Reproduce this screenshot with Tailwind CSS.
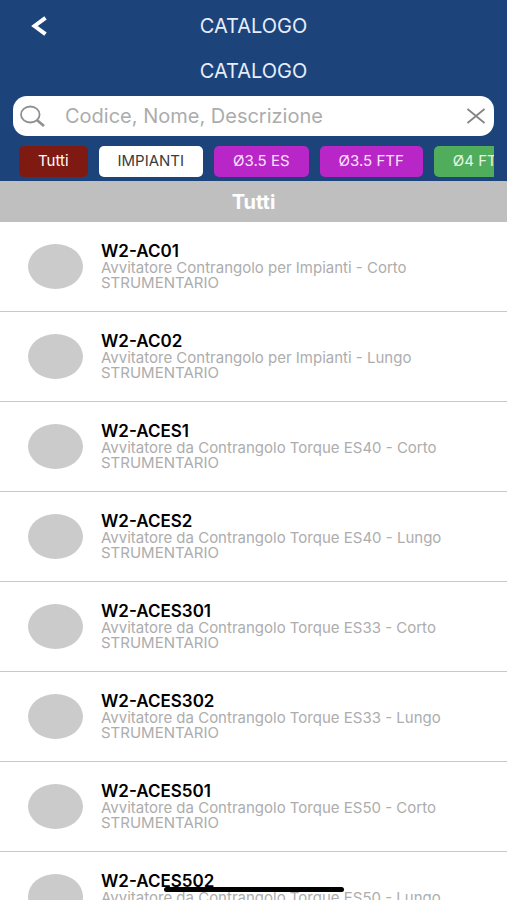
<!DOCTYPE html>
<html lang="it">
<head>
<meta charset="utf-8">
<meta name="viewport" content="width=device-width, initial-scale=1">
<title>Catalogo</title>
<script src="https://cdn.jsdelivr.net/npm/@tailwindcss/browser@4"></script>
</head>
<body class="h-screen overflow-hidden bg-white font-['Inter','Liberation_Sans',sans-serif]">
<div class="flex h-full flex-col">
  <header class="shrink-0 bg-[#1d437b] px-[13px] pb-1 text-[#e6eefc]">
    <div class="grid h-[52px] grid-cols-[52px_1fr_52px] items-center">
      <button type="button" aria-label="Indietro" class="flex justify-center">
        <svg class="h-5 w-4" viewBox="0 0 16 20" fill="none" stroke="#fff" stroke-width="4"><path d="M14.500 1.800 3.500 10l11 8.200"/></svg>
      </button>
      <h1 class="text-center text-xl">CATALOGO</h1>
    </div>
    <h2 class="flex h-11 items-center justify-center pb-[6px] text-xl">CATALOGO</h2>
    <label class="flex h-10 items-center rounded-[14px] bg-white pr-2 pl-[7px]">
      <svg class="h-6 w-[26px] shrink-0" viewBox="0 0 26 24" fill="none" stroke="#8f8f8f" stroke-width="1.800"><ellipse cx="10.300" cy="10.500" rx="9.300" ry="8"/><path d="M16.800 16 24 22" stroke-width="2.600"/></svg>
      <input type="text" aria-label="Cerca" placeholder="Codice, Nome, Descrizione" class="ml-[19px] min-w-0 flex-1 bg-transparent text-xl text-gray-700 outline-none placeholder:text-[#acacac]">
      <button type="button" aria-label="Cancella" class="shrink-0">
        <svg class="h-4 w-5" viewBox="0 0 20 16" fill="none" stroke="#858585" stroke-width="1.800"><path d="M1.500 1 18.500 15M18.500 1 1.500 15"/></svg>
      </button>
    </label>
    <nav class="mt-[10px] flex gap-[11px] overflow-hidden pl-[6px] text-[15px] whitespace-nowrap">
      <button type="button" class="h-[31px] shrink-0 rounded-[5px] bg-[#7f1a12] px-[19px] text-white">Tutti</button>
      <button type="button" class="h-[31px] shrink-0 rounded-[5px] bg-white px-[19px] text-[#3c3c3c]">IMPIANTI</button>
      <button type="button" class="h-[31px] shrink-0 rounded-[5px] bg-[#b926c8] px-[19px] text-[#fbe3fd]">Ø3.5 ES</button>
      <button type="button" class="h-[31px] shrink-0 rounded-[5px] bg-[#b926c8] px-[19px] text-[#fbe3fd]">Ø3.5 FTF</button>
      <button type="button" class="h-[31px] shrink-0 rounded-[5px] bg-[#4fad5b] px-[19px] text-[#e6f8e8]">Ø4 FTF</button>
    </nav>
  </header>
  <h3 class="flex h-[41px] shrink-0 items-center justify-center bg-[#bfbfbf] text-xl font-bold text-white">Tutti</h3>
  <ul id="list" class="min-h-0 flex-1 overflow-hidden"></ul>
</div>
<div class="fixed bottom-2 left-1/2 h-[5px] w-[180px] -translate-x-1/2 rounded-full bg-black"></div>
<template id="row">
  <li class="flex h-[90px] items-center border-b border-[#c8c8c8] pl-7">
    <span class="h-[45px] w-[55px] shrink-0 rounded-[50%] bg-[#cbcbcb]"></span>
    <a href="#" class="ml-[18px] block text-[15px] leading-[15px] whitespace-nowrap text-[#adadad]">
      <strong class="block text-[17px] leading-[17px] font-semibold text-black"></strong>
      <span class="block"></span>
      <span class="block">STRUMENTARIO</span>
    </a>
  </li>
</template>
<script>
const items = [
  ["W2-AC01", "Avvitatore Contrangolo per Impianti - Corto"],
  ["W2-AC02", "Avvitatore Contrangolo per Impianti - Lungo"],
  ["W2-ACES1", "Avvitatore da Contrangolo Torque ES40 - Corto"],
  ["W2-ACES2", "Avvitatore da Contrangolo Torque ES40 - Lungo"],
  ["W2-ACES301", "Avvitatore da Contrangolo Torque ES33 - Corto"],
  ["W2-ACES302", "Avvitatore da Contrangolo Torque ES33 - Lungo"],
  ["W2-ACES501", "Avvitatore da Contrangolo Torque ES50 - Corto"],
  ["W2-ACES502", "Avvitatore da Contrangolo Torque ES50 - Lungo"]
];
const list = document.getElementById("list");
const row = document.getElementById("row");
for (const [code, description] of items) {
  const node = row.content.cloneNode(true);
  node.querySelector("strong").textContent = code;
  node.querySelector("a span").textContent = description;
  list.append(node);
}
</script>
</body>
</html>
